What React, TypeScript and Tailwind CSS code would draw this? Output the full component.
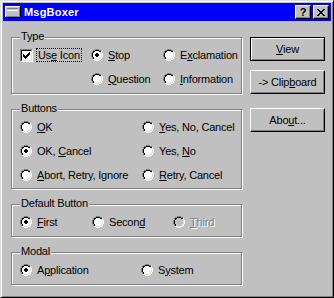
import React from "react";

type PxProps = { rows: string[]; colors: Record<string, string>; className?: string };

function PixelArt({ rows, colors, className }: PxProps) {
  const h = rows.length;
  const w = rows[0].length;
  const rects: React.ReactElement[] = [];
  rows.forEach((row, y) => {
    row.split("").forEach((ch, x) => {
      const c = colors[ch];
      if (c) rects.push(<rect key={`${x}-${y}`} x={x} y={y} width={1} height={1} fill={c} />);
    });
  });
  return (
    <svg width={w} height={h} viewBox={`0 0 ${w} ${h}`} shapeRendering="crispEdges" className={className}>
      {rects}
    </svg>
  );
}

const OUTER: Record<number, number[]> = {
  0: [4, 5, 6, 7],
  1: [2, 3, 8, 9],
  2: [1, 10],
  3: [1, 10],
  4: [0, 11],
  5: [0, 11],
  6: [0, 11],
  7: [0, 11],
  8: [1, 10],
  9: [1, 10],
  10: [2, 3, 8, 9],
  11: [4, 5, 6, 7],
};
const INNER: Record<number, number[]> = {
  1: [4, 5, 6, 7],
  2: [2, 3, 8, 9],
  3: [2, 9],
  4: [1, 10],
  5: [1, 10],
  6: [1, 10],
  7: [1, 10],
  8: [2, 9],
  9: [2, 3, 8, 9],
  10: [4, 5, 6, 7],
};
const FILL: Record<number, number[]> = {
  2: [4, 5, 6, 7],
  3: [3, 4, 5, 6, 7, 8],
  4: [2, 3, 4, 5, 6, 7, 8, 9],
  5: [2, 3, 4, 5, 6, 7, 8, 9],
  6: [2, 3, 4, 5, 6, 7, 8, 9],
  7: [2, 3, 4, 5, 6, 7, 8, 9],
  8: [3, 4, 5, 6, 7, 8],
  9: [4, 5, 6, 7],
};
const DOT: Record<number, number[]> = {
  4: [5, 6],
  5: [4, 5, 6, 7],
  6: [4, 5, 6, 7],
  7: [5, 6],
};

function radioRows(checked: boolean): string[] {
  const rows: string[] = [];
  for (let y = 0; y < 12; y++) {
    let r = "";
    for (let x = 0; x < 12; x++) {
      let ch = ".";
      if (OUTER[y]?.includes(x)) ch = x + y < 11 ? "G" : "W";
      else if (INNER[y]?.includes(x)) ch = x + y <= 11 ? "K" : "L";
      else if (FILL[y]?.includes(x)) ch = checked && DOT[y]?.includes(x) ? "K" : "F";
      r += ch;
    }
    rows.push(r);
  }
  return rows;
}

function RadioIcon({ checked = false, disabled = false }: { checked?: boolean; disabled?: boolean }) {
  return (
    <PixelArt
      className="shrink-0"
      rows={radioRows(checked)}
      colors={{ G: "#808080", W: "#ffffff", K: "#000000", L: "#dfdfdf", F: disabled ? "#c0c0c0" : "#ffffff" }}
    />
  );
}

function Radio({
  checked = false,
  disabled = false,
  children,
}: {
  checked?: boolean;
  disabled?: boolean;
  children: React.ReactNode;
}) {
  return (
    <div className="flex items-center">
      <RadioIcon checked={checked} disabled={disabled} />
      <span
        className={
          disabled
            ? "ml-[5px] whitespace-nowrap leading-[13px] text-[#808080] [text-shadow:1px_1px_0_#ffffff]"
            : "ml-[5px] whitespace-nowrap leading-[13px]"
        }
      >
        {children}
      </span>
    </div>
  );
}

function CheckBox() {
  return (
    <div className="h-[13px] w-[13px] shrink-0 border border-t-[#808080] border-l-[#808080] border-r-white border-b-white">
      <div className="flex h-full w-full items-center justify-center border border-t-black border-l-black border-r-[#dfdfdf] border-b-[#dfdfdf] bg-white">
        <PixelArt
          rows={["......K", ".....KK", "K...KKK", "KK.KKK.", "KKKKK..", ".KKK...", "..K...."]}
          colors={{ K: "#000000" }}
        />
      </div>
    </div>
  );
}

function Group({ label, className, children }: { label: string; className: string; children: React.ReactNode }) {
  return (
    <div className={`relative border border-[#808080] shadow-[inset_1px_1px_0_#ffffff,1px_1px_0_#ffffff] ${className}`}>
      <span className="absolute left-[8px] top-[-8px] whitespace-nowrap bg-[#c0c0c0] px-[1px] leading-[13px]">
        {label}
      </span>
      {children}
    </div>
  );
}

function PushButton({ isDefault = false, children }: { isDefault?: boolean; children: React.ReactNode }) {
  return (
    <div
      className={
        isDefault
          ? "flex h-[24px] w-[75px] items-center justify-center border border-black bg-[#c0c0c0] shadow-[inset_1px_1px_0_#ffffff,inset_-1px_-1px_0_#808080]"
          : "flex h-[24px] w-[75px] items-center justify-center border border-t-white border-l-white border-r-black border-b-black bg-[#c0c0c0] shadow-[inset_-1px_-1px_0_#808080]"
      }
    >
      <span className="whitespace-nowrap leading-[13px]">{children}</span>
    </div>
  );
}

function CaptionButton({ children }: { children: React.ReactNode }) {
  return (
    <div className="flex h-[14px] w-[16px] items-center justify-center border border-t-white border-l-white border-r-black border-b-black bg-[#c0c0c0] shadow-[inset_-1px_-1px_0_#808080]">
      {children}
    </div>
  );
}

function WindowIcon() {
  return (
    <PixelArt
      rows={[
        "................",
        "................",
        "WWWWWWWWWWWWWWWK",
        "WLLLLLLLLLLLLLGK",
        "WLGGGGGGGGGGGLGK",
        "WLLLLLLLLLLLLLGK",
        "WLWWWWWWWWWWWLGK",
        "WLLLLLLLLLLLLLGK",
        "WLLLLLLLLLLLLLGK",
        "WLLLLLLLLLLLLLGK",
        "WLLLLLLLLLLLLLGK",
        "WLLLLLLLLLLLLLGK",
        "WGGGGGGGGGGGGGGK",
        "KKKKKKKKKKKKKKKK",
        "................",
        "................",
      ]}
      colors={{ W: "#ffffff", L: "#c0c0c0", G: "#808080", K: "#000000" }}
    />
  );
}

export default function App() {
  return (
    <div className="h-[298px] w-[334px] border border-t-[#dfdfdf] border-l-[#dfdfdf] border-r-black border-b-black bg-[#c0c0c0] p-[2px] font-['Liberation_Sans',Arial,sans-serif] text-[11px] text-black shadow-[inset_1px_1px_0_#ffffff,inset_-1px_-1px_0_#808080]">
      <div className="flex h-[18px] items-center bg-[#0000ff] px-[2px]">
        <WindowIcon />
        <span className="ml-[3px] text-[11px] font-bold leading-[13px] tracking-[0.2px] text-white">MsgBoxer</span>
        <div className="ml-auto flex gap-[2px]">
          <CaptionButton>
            <span className="text-[11px] font-bold leading-[11px]">?</span>
          </CaptionButton>
          <CaptionButton>
            <PixelArt
              rows={["KK....KK", ".KK..KK.", "..KKKK..", "...KK...", "..KKKK..", ".KK..KK.", "KK....KK"]}
              colors={{ K: "#000000" }}
            />
          </CaptionButton>
        </div>
      </div>

      <div className="flex pl-[8px] pt-[16px] tracking-[-0.2px]">
        <div className="flex w-[231px] flex-col gap-[15px]">
          <Group label="Type" className="h-[57px]">
            <div className="grid auto-rows-[24px] grid-cols-[71px_72px_1fr] pl-[8px] pt-[5px]">
              <div className="flex items-center">
                <CheckBox />
                <span className="ml-[3px] whitespace-nowrap border border-dotted border-black px-[1px] leading-[12px]">
                  Us<u>e</u> Icon
                </span>
              </div>
              <Radio checked>
                <u>S</u>top
              </Radio>
              <Radio>
                E<u>x</u>clamation
              </Radio>
              <div />
              <Radio>
                <u>Q</u>uestion
              </Radio>
              <Radio>
                <u>I</u>nformation
              </Radio>
            </div>
          </Group>

          <Group label="Buttons" className="h-[80px]">
            <div className="grid auto-rows-[24px] grid-cols-[122px_1fr] pl-[8px] pt-[5px]">
              <Radio>
                <u>O</u>K
              </Radio>
              <Radio>
                <u>Y</u>es, No, Cancel
              </Radio>
              <Radio checked>
                OK, <u>C</u>ancel
              </Radio>
              <Radio>
                Yes, <u>N</u>o
              </Radio>
              <Radio>
                <u>A</u>bort, Retry, Ignore
              </Radio>
              <Radio>
                <u>R</u>etry, Cancel
              </Radio>
            </div>
          </Group>

          <Group label="Default Button" className="h-[33px]">
            <div className="grid auto-rows-[24px] grid-cols-[72px_81px_1fr] pl-[8px] pt-[5px]">
              <Radio checked>
                <u>F</u>irst
              </Radio>
              <Radio>
                Secon<u>d</u>
              </Radio>
              <Radio disabled>
                <u>T</u>hird
              </Radio>
            </div>
          </Group>

          <Group label="Modal" className="h-[33px]">
            <div className="grid auto-rows-[24px] grid-cols-[121px_1fr] pl-[8px] pt-[5px]">
              <Radio checked>
                A<u>p</u>plication
              </Radio>
              <Radio>
                S<u>y</u>stem
              </Radio>
            </div>
          </Group>
        </div>

        <div className="ml-[8px] flex flex-col">
          <PushButton isDefault>
            <u>V</u>iew
          </PushButton>
          <div className="mt-[9px]">
            <PushButton>
              -&gt; Clip<u>b</u>oard
            </PushButton>
          </div>
          <div className="mt-[14px]">
            <PushButton>
              Abo<u>u</u>t...
            </PushButton>
          </div>
        </div>
      </div>
    </div>
  );
}
